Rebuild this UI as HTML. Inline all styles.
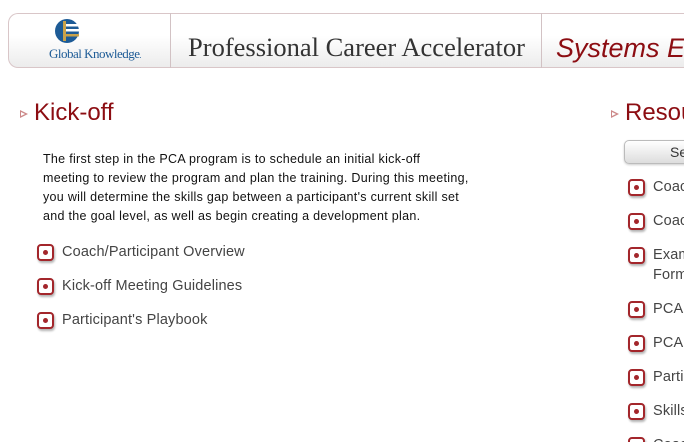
<!DOCTYPE html>
<html style="overflow:hidden"><head><style>
html,body{overflow:hidden}
body{margin:0;width:684px;height:442px;background:#fff;font-family:"Liberation Sans",sans-serif;position:relative}
.hdr{position:absolute;left:8px;top:13px;width:676px;height:53px;border:1px solid #d9c6c8;border-right:none;border-radius:10px 0 0 10px;background:linear-gradient(#fff,#fff 40%,#ececec)}
.div{position:absolute;top:13px;width:1px;height:55px;background:#d2c2c4}
.t{position:absolute;white-space:nowrap;overflow:hidden}
.ic{position:absolute;width:13px;height:13px;border:2px solid #a3262b;border-radius:4px;background:#fff;box-shadow:1px 2px 2px rgba(0,0,0,.3)}
.ic:after{content:"";position:absolute;left:4px;top:4px;width:5px;height:5px;border-radius:50%;background:#a3262b}
.li{position:absolute;font-size:14.5px;letter-spacing:.15px;color:#444;white-space:nowrap;overflow:hidden}
.tri{position:absolute;width:0;height:0;border-left:8px solid #c88;border-top:4.5px solid transparent;border-bottom:4.5px solid transparent}
.tri:after{content:"";position:absolute;left:-7px;top:-2.5px;border-left:4px solid #fff;border-top:2.5px solid transparent;border-bottom:2.5px solid transparent}
</style></head><body>
<div class="hdr"></div>
<div class="div" style="left:170px"></div>
<div class="div" style="left:541px"></div>
<svg style="position:absolute;left:54px;top:18px" width="26" height="26" viewBox="0 0 26 26">
<circle cx="13" cy="13" r="12" fill="#1d5b96"/>
<rect x="9" y="3" width="3" height="20" fill="#c9a24a"/>
<rect x="12" y="6" width="13" height="2.5" fill="#fff"/><rect x="12" y="11" width="13" height="2.5" fill="#fff"/><rect x="12" y="16" width="13" height="2.5" fill="#c9a24a"/>
</svg>
<div class="t" style="left:49px;top:46px;font-family:'Liberation Serif',serif;font-size:13px;color:#1d5b96;letter-spacing:-.5px">Global Knowledge<span style="font-size:8px">.</span></div>
<div class="t" style="left:188px;top:32px;font-family:'Liberation Serif',serif;font-size:26.5px;color:#333">Professional Career Accelerator</div>
<div class="t" style="left:556px;top:33px;width:128px;font-size:27px;color:#8c0d12;font-style:italic">Systems Engineer</div>
<div class="tri" style="left:20px;top:110px"></div>
<div class="t" style="left:34px;top:99px;font-size:24px;color:#8c0d12">Kick-off</div>
<div class="t" style="left:43px;top:150px;font-size:12.5px;letter-spacing:.3px;line-height:19px;color:#111">The first step in the PCA program is to schedule an initial kick-off<br>meeting to review the program and plan the training. During this meeting,<br>you will determine the skills gap between a participant's current skill set<br>and the goal level, as well as begin creating a development plan.</div>
<div class="ic" style="left:37px;top:244px"></div><div class="li" style="left:62px;top:244px">Coach/Participant Overview</div>
<div class="ic" style="left:37px;top:278px"></div><div class="li" style="left:62px;top:278px">Kick-off Meeting Guidelines</div>
<div class="ic" style="left:37px;top:312px"></div><div class="li" style="left:62px;top:312px">Participant's Playbook</div>
<div class="tri" style="left:611px;top:110px"></div>
<div class="t" style="left:625px;top:99px;width:59px;font-size:24px;color:#8c0d12">Resources</div>
<div style="position:absolute;left:624px;top:140px;width:70px;height:22px;border:1px solid #bbb;border-radius:5px;background:linear-gradient(#fff,#ddd);box-shadow:0 1px 2px rgba(0,0,0,.2)"></div>
<div class="t" style="left:670px;top:144px;width:14px;font-size:14px;color:#333">Se</div>
<div class="ic" style="left:628px;top:179px"></div><div class="li" style="left:653px;top:179px;width:31px">Coach</div>
<div class="ic" style="left:628px;top:213px"></div><div class="li" style="left:653px;top:213px;width:31px">Coach</div>
<div class="ic" style="left:628px;top:247px"></div><div class="li" style="left:653px;top:245px;width:31px;line-height:20px">Exam<br>Form</div>
<div class="ic" style="left:628px;top:301px"></div><div class="li" style="left:653px;top:301px;width:31px">PCA</div>
<div class="ic" style="left:628px;top:335px"></div><div class="li" style="left:653px;top:335px;width:31px">PCA</div>
<div class="ic" style="left:628px;top:369px"></div><div class="li" style="left:653px;top:369px;width:31px">Parti</div>
<div class="ic" style="left:628px;top:403px"></div><div class="li" style="left:653px;top:403px;width:31px">Skills</div>
<div class="ic" style="left:628px;top:437px"></div><div class="li" style="left:653px;top:437px;width:31px;height:5px">Coach</div>
</body></html>
